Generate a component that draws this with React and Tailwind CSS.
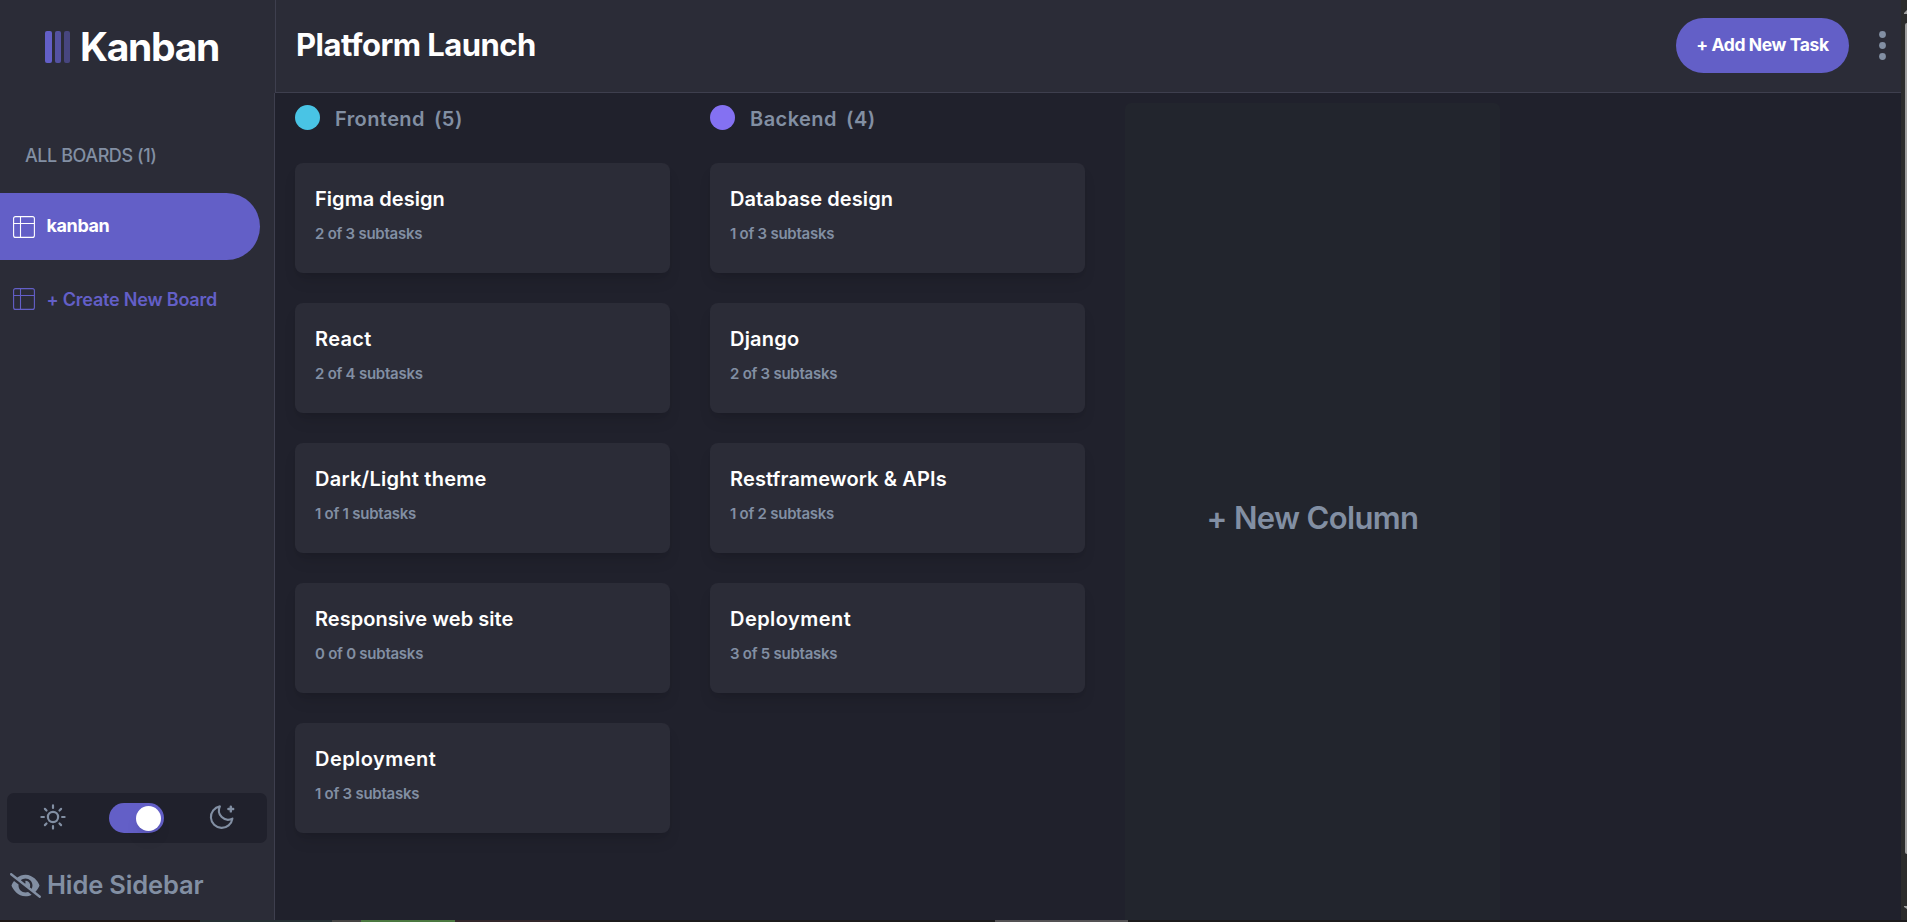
import { FaEyeSlash } from "react-icons/fa6";

const columns = [
  {
    name: "Frontend",
    count: "(5)",
    dot: "bg-[#49c4e5]",
    tracking: "tracking-[0.41px]",
    tasks: [
      { title: "Figma design", sub: "2 of 3 subtasks", tracking: "tracking-[0.05px]" },
      { title: "React", sub: "2 of 4 subtasks", tracking: "tracking-[0.35px]" },
      { title: "Dark/Light theme", sub: "1 of 1 subtasks", tracking: "tracking-[0.25px]" },
      { title: "Responsive web site", sub: "0 of 0 subtasks", tracking: "tracking-[0.03px]" },
      { title: "Deployment", sub: "1 of 3 subtasks", tracking: "tracking-[0.45px]" },
    ],
  },
  {
    name: "Backend",
    count: "(4)",
    dot: "bg-[#8471f2]",
    tracking: "tracking-[0.45px]",
    tasks: [
      { title: "Database design", sub: "1 of 3 subtasks", tracking: "tracking-[0.08px]" },
      { title: "Django", sub: "2 of 3 subtasks", tracking: "tracking-[0.2px]" },
      { title: "Restframework & APIs", sub: "1 of 2 subtasks", tracking: "tracking-[0.13px]" },
      { title: "Deployment", sub: "3 of 5 subtasks", tracking: "tracking-[0.45px]" },
    ],
  },
];

function BoardIcon() {
  return (
    <svg width="22" height="22" viewBox="0 0 22 22" fill="none" stroke="currentColor" strokeWidth="1.1">
      <rect x="0.6" y="0.6" width="20.8" height="20.8" rx="2" />
      <path d="M7.5 .6v20.8M.6 7.5h20.8" />
    </svg>
  );
}

function SunIcon() {
  return (
    <svg width="26" height="26" viewBox="0 0 26 26" fill="none" stroke="currentColor" strokeWidth="2.2" strokeLinecap="round">
      <circle cx="13" cy="13" r="5.1" />
      <path d="M13 1.4v2.5M13 22.1v2.5M1.4 13h2.5M22.1 13h2.5M4.9 4.9l1.6 1.6M19.5 19.5l1.6 1.6M4.9 21.1l1.6-1.6M19.5 6.5l1.6-1.6" />
    </svg>
  );
}

function MoonIcon() {
  return (
    <svg width="26" height="26" viewBox="0 0 26 26" fill="none" stroke="currentColor" strokeWidth="2.1" strokeLinecap="round" strokeLinejoin="round">
      <path d="M10.9 2.4A10.8 10.8 0 1 0 23.4 14.6 9.2 9.2 0 0 1 10.9 2.4Z" />
      <path strokeWidth="2.4" d="M21.8 2.6v4.8M19.4 5H24.2" />
    </svg>
  );
}

function TaskCard({ title, sub, tracking }) {
  return (
    <article className="h-[110px] w-[375px] rounded-lg bg-[#2b2c37] px-5 pt-[21px] shadow-lg">
      <h3 className={`h-[30px] text-[20px] leading-[30px] font-semibold text-white ${tracking}`}>{title}</h3>
      <p className="mt-2 text-[15px] leading-[23px] font-semibold tracking-[-0.25px] text-[#828fa3]">{sub}</p>
    </article>
  );
}

function Sidebar() {
  return (
    <aside className="flex w-[275px] shrink-0 flex-col bg-[#2b2c37] text-[#828fa3]">
      <div className="flex h-[93px] items-center pl-[45px]">
        <div className="flex h-8 gap-[3px]">
          <span className="w-[7px] rounded-[2px] bg-[#635fc7]" />
          <span className="w-[6px] rounded-[2px] bg-[#635fc7]/75" />
          <span className="w-[6px] rounded-[2px] bg-[#635fc7]/50" />
        </div>
        <span className="ml-[10px] text-[39px] leading-[44px] font-bold tracking-[-1.3px] text-white">Kanban</span>
      </div>
      <div className="flex flex-1 flex-col border-r border-[#3e3f4e]">
        <h2 className="mt-[51px] pl-[25px] text-[18px] leading-6 font-medium tracking-[-0.43px]">ALL BOARDS (1)</h2>
        <nav className="mt-[25px] flex flex-col">
          <button className="flex h-[67px] w-[260px] items-center gap-3 rounded-r-full bg-[#635fc7] pl-[12.5px] text-[18px] font-bold tracking-[-0.4px] text-white">
            <BoardIcon />
            <span className="pb-[2px]">kanban</span>
          </button>
          <button className="mt-[5px] flex h-[67px] items-center gap-3 pl-[12.5px] text-[18px] font-semibold tracking-[-0.2px] text-[#635fc7]">
            <BoardIcon />
            <span className="pt-[2px]">+ Create New Board</span>
          </button>
        </nav>
        <div className="mt-auto ml-[7px] flex h-[50px] w-[260px] items-center rounded-[7px] bg-[#20212c] pb-[2px] pl-[33px]">
          <SunIcon />
          <button className="ml-[43px] flex h-[30px] w-[55px] translate-y-[1px] items-center justify-end rounded-full bg-[#635fc7] pr-[3px]">
            <span className="size-[25px] rounded-full bg-white shadow-lg" />
          </button>
          <span className="ml-[45px]"><MoonIcon /></span>
        </div>
        <button className="mt-[26px] mb-[18px] flex h-[33px] items-center pl-[10px] text-[25.5px] font-semibold tracking-[-0.15px]">
          <FaEyeSlash className="h-[25px] w-[31px]" />
          <span className="ml-[6px]">Hide Sidebar</span>
        </button>
      </div>
    </aside>
  );
}

function Header() {
  return (
    <header className="flex h-[93px] shrink-0 items-center border-b border-l border-[#3e3f4e] bg-[#2b2c37]">
      <h1 className="pb-[3px] pl-5 text-[31px] leading-[40px] font-bold tracking-[-0.52px] text-white">Platform Launch</h1>
      <button className="mr-[30px] mb-[1px] ml-auto h-[55px] w-[173px] rounded-full bg-[#635fc7] text-[17.5px] font-bold tracking-[-0.4px] text-white">
        + Add New Task
      </button>
      <svg className="mr-[15px] mb-[1px] text-[#828fa3]" width="7" height="29" viewBox="0 0 7 29" fill="currentColor">
        <circle cx="3.5" cy="3.5" r="3.4" />
        <circle cx="3.5" cy="14.5" r="3.4" />
        <circle cx="3.5" cy="25.5" r="3.4" />
      </svg>
    </header>
  );
}

function Scrollbar() {
  return (
    <div className="flex w-[6px] shrink-0 flex-col items-end bg-[#2c2c2c] text-[#9f9f9f]">
      <svg className="mt-[10px]" width="3" height="4" viewBox="0 0 3 4" fill="currentColor"><path d="M3 0v4H0V3z" /></svg>
      <div className="mt-[9px] h-[831px] w-[2px] rounded-l-full bg-[#9f9f9f]" />
      <svg className="mt-[52px]" width="3" height="3" viewBox="0 0 3 3" fill="currentColor"><path d="M0 0h3v3L0 1z" /></svg>
    </div>
  );
}

export default function App() {
  return (
    <div className="flex h-[922px] w-full flex-col overflow-hidden bg-[#20212c] font-['Inter',sans-serif] whitespace-nowrap">
      <div className="flex h-[920px]">
        <Sidebar />
        <div className="flex min-w-0 flex-1 flex-col">
          <Header />
          <main className="flex flex-1 gap-10 overflow-hidden pt-[10px] pl-5">
            {columns.map((c) => (
              <section key={c.name} className="flex w-[375px] shrink-0 flex-col">
                <div className="flex h-[30px] items-center text-[20px] leading-[30px] font-semibold text-[#828fa3]">
                  <span className={`mr-[15px] mb-[1px] size-[25px] rounded-full ${c.dot}`} />
                  <span className={`pt-[2px] ${c.tracking}`}>{c.name}</span>
                  <span className="ml-[9px] pt-[2px] tracking-[0.5px]">{c.count}</span>
                </div>
                <div className="mt-[30px] flex flex-col gap-[30px]">
                  {c.tasks.map((t) => (
                    <TaskCard key={t.title} {...t} />
                  ))}
                </div>
              </section>
            ))}
            <button className="flex h-[830px] w-[375px] shrink-0 items-center justify-center rounded-md bg-[#22252d] text-[31px] font-semibold tracking-[-0.65px] text-[#828fa3]">
              + New Column
            </button>
          </main>
        </div>
        <Scrollbar />
      </div>
      <div className="flex h-[2px] bg-[#1c1b1c]">
        <span className="w-[200px] bg-[#1e1816]" />
        <span className="w-[132px] bg-[#263034]" />
        <span className="w-[29px] bg-[#454443]" />
        <span className="w-[94px] bg-[#4b7840]" />
        <span className="w-[105px] bg-[#33272a]" />
        <span className="ml-[435px] w-[133px] bg-[#545254]" />
      </div>
    </div>
  );
}
